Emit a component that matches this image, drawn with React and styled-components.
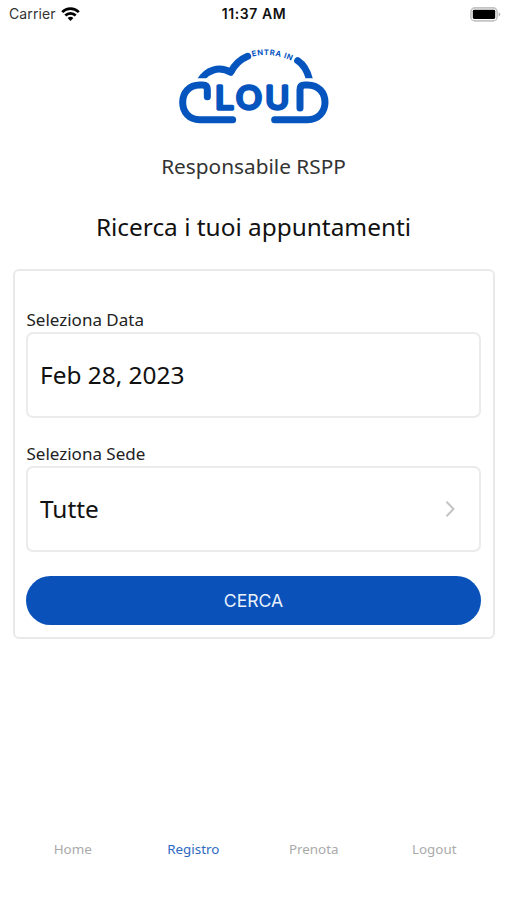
import React from 'react';
import styled, { createGlobalStyle } from 'styled-components';

const BLUE = '#0a52b9';

const GlobalStyle = createGlobalStyle`
    * {
        box-sizing: border-box;
    }

    body {
        margin: 0;
        background: #fff;
        color: #111;
        font-family: 'Noto Sans', sans-serif;
    }
`;

const Screen = styled.div`
    display: flex;
    flex-direction: column;
    align-items: center;
    width: 507px;
    height: 900px;
    overflow: hidden;
    background: #fff;
`;

const StatusBar = styled.header`
    display: grid;
    grid-template-columns: 1fr auto 1fr;
    align-items: center;
    width: 100%;
    height: 28px;
    padding: 0 6px 0 9px;
    font-family: Inter, sans-serif;
    font-size: 14px;
    line-height: 28px;
`;

const Carrier = styled.div`
    display: flex;
    align-items: center;
    gap: 5px;
    color: #333;
    letter-spacing: 0.1px;
`;

const Time = styled.div`
    margin-right: 2px;
    font-weight: 600;
    font-size: 14px;
    letter-spacing: 0.6px;
`;

const BatterySlot = styled.div`
    display: flex;
    justify-content: flex-end;
`;

const LogoSvg = styled.svg`
    display: block;
    flex: none;
    margin-top: 12px;
    margin-left: 2px;
    fill: none;
    stroke: #0655bf;
    stroke-width: 21;
    stroke-linecap: round;
    stroke-linejoin: round;

    text {
        fill: #0655bf;
        font-family: Inter, sans-serif;
    }
`;

const Letter = styled.text`
    font-size: 92px;
    font-weight: 400;
    stroke-width: 10;
`;

const Tagline = styled.text`
    font-size: 23px;
    font-weight: 700;
    stroke: none;
`;

const Role = styled.p`
    margin: 21px 0 0;
    color: #333;
    font-size: 20.8px;
    line-height: 30px;
`;

const Title = styled.h1`
    margin: 28px 0 0;
    color: #111;
    font-size: 24.4px;
    font-weight: 400;
    line-height: 36px;
`;

const Card = styled.section`
    display: flex;
    flex-direction: column;
    width: 482px;
    height: 370px;
    margin-top: 24px;
    padding: 37px 11.5px 0;
    border: 2px solid #e9e9e9;
    border-radius: 6px;
`;

const Label = styled.label`
    height: 24px;
    margin-top: ${props => props.$mt || 0}px;
    padding-left: 0.5px;
    color: #222;
    font-size: 17px;
    line-height: 24px;
`;

const Field = styled.div`
    display: flex;
    align-items: center;
    justify-content: space-between;
    height: 86px;
    padding: 0 23px 2px 12px;
    border: 2px solid #ebebeb;
    border-radius: 7px;
    font-size: 24.4px;
`;

const SearchButton = styled.button`
    height: 49px;
    margin-top: 24px;
    padding: 0;
    border: 0;
    border-radius: 25px;
    background: ${BLUE};
    color: #e9f1fb;
    font-family: Inter, sans-serif;
    font-size: 17.6px;
`;

const TabBar = styled.nav`
    display: grid;
    grid-template-columns: repeat(4, 1fr);
    width: 482px;
    margin-top: auto;
    padding-bottom: 41px;
`;

const Tab = styled.a`
    color: ${props => props.$active ? '#2d69c2' : '#aaa'};
    font-size: 13.4px;
    line-height: 20px;
    text-align: center;
`;

const WifiIcon = () => (
    <svg width="19" height="15" viewBox="0 0 19 15" fill="none" stroke="#000" strokeWidth="2.7">
        <path d="M1.2 5.1C5.8 0.5 13.2 0.5 17.8 5.1" />
        <path d="M4.3 8.5C7.2 5.6 11.8 5.6 14.7 8.5" />
        <path d="M9.5 14 6.6 10.9Q9.5 8.8 12.4 10.9Z" fill="#000" stroke="none" />
    </svg>
);

const BatteryIcon = () => (
    <svg width="31" height="15" viewBox="0 0 31 15">
        <rect x="0.9" y="0.9" width="26.2" height="13" rx="4" fill="#fff" stroke="#c4c4c4" strokeWidth="1.6" />
        <rect x="2.8" y="2.8" width="22.4" height="9.2" rx="1.4" fill="#000" />
        <path d="M28.6 5.2Q30.4 5.8 30.4 7.4T28.6 9.6Z" fill="#bdbdbd" />
    </svg>
);

const Chevron = () => (
    <svg width="12" height="18" viewBox="0 0 12 18" fill="none" stroke="#c4c4c4" strokeWidth="2">
        <path d="M2.5 2.8 9.5 10 2.5 17.2" />
    </svg>
);

const Logo = () => (
    <LogoSvg width="170" height="90" viewBox="0 0 510 270">
        <defs>
            <path id="arc" d="M247 50Q306 36 366 63" />
            <clipPath id="cloudTop">
                <rect x="0" y="0" width="510" height="115" />
            </clipPath>
        </defs>
        <g clipPath="url(#cloudTop)">
            <path d="M86 132C106 86 150 78 182 97C193 76 213 57 233 49" />
            <path d="M383 62C401 74 413 92 420 125" />
        </g>
        {/* cloud sides */}
        <path d="M112 170V149Q112 135 98 135H89C57 135 38 158 38 187S57 239 89 239H188" />
        <path d="M390 204V149Q390 135 404 135H413C445 135 465 158 465 187S445 239 413 239H314" />
        <Letter x="136" y="206.5" textLength="56" lengthAdjust="spacingAndGlyphs">L</Letter>
        <Letter x="197" y="206.5" textLength="79" lengthAdjust="spacingAndGlyphs">O</Letter>
        <Letter x="286" y="206.5" textLength="72" lengthAdjust="spacingAndGlyphs">U</Letter>
        <Tagline>
            <textPath href="#arc" textLength="120">ENTRA IN</textPath>
        </Tagline>
    </LogoSvg>
);

const tabs = ['Home', 'Registro', 'Prenota', 'Logout'];

export default function App() {
    return (
        <>
            <GlobalStyle />
            <Screen>
                <StatusBar>
                    <Carrier>Carrier <WifiIcon /></Carrier>
                    <Time>11:37 AM</Time>
                    <BatterySlot><BatteryIcon /></BatterySlot>
                </StatusBar>
                <Logo />
                <Role>Responsabile RSPP</Role>
                <Title>Ricerca i tuoi appuntamenti</Title>
                <Card>
                    <Label>Seleziona Data</Label>
                    <Field>Feb 28, 2023</Field>
                    <Label $mt={24}>Seleziona Sede</Label>
                    <Field>Tutte <Chevron /></Field>
                    <SearchButton>CERCA</SearchButton>
                </Card>
                <TabBar>
                    {tabs.map(tab => (
                        <Tab key={tab} $active={tab === 'Registro'}>{tab}</Tab>
                    ))}
                </TabBar>
            </Screen>
        </>
    );
}
